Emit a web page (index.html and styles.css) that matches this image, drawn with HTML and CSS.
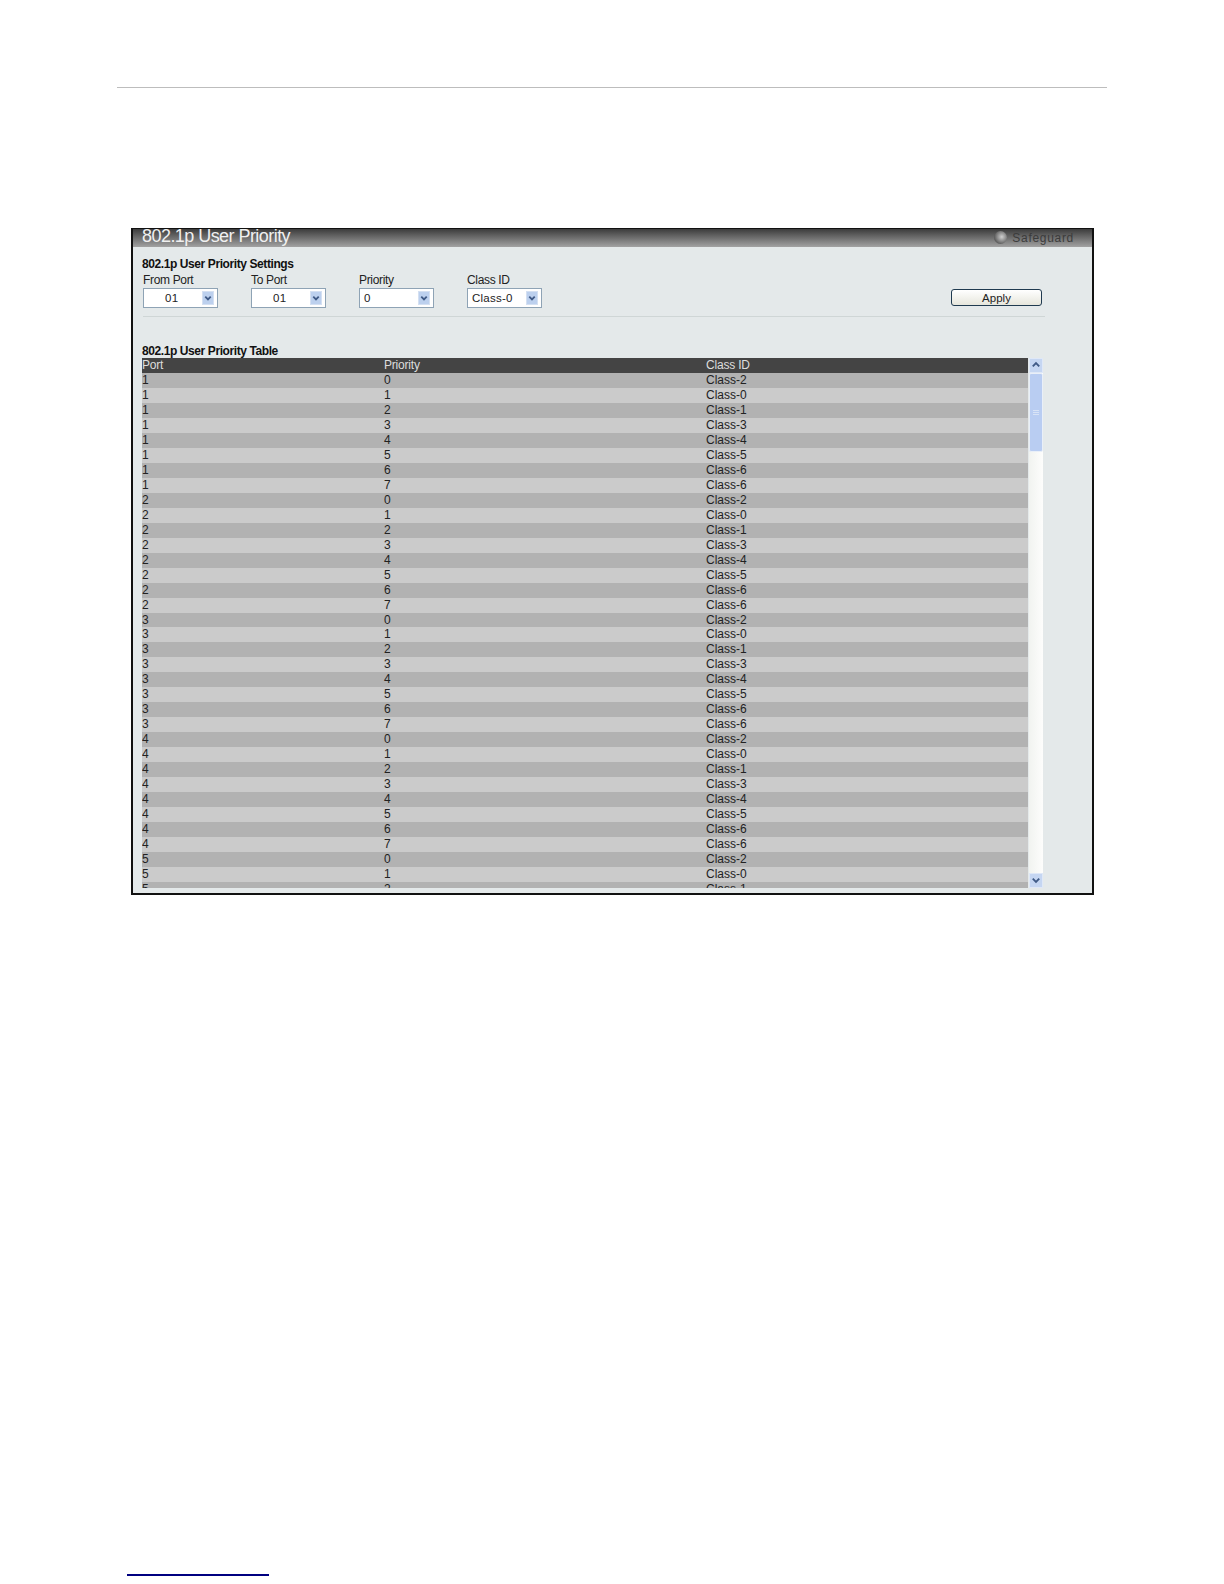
FILE: index.html
```html
<!DOCTYPE html>
<html lang="en">
<head>
<meta charset="utf-8">
<title>802.1p User Priority</title>
<link rel="stylesheet" href="styles.css">
</head>
<body>
<div class="page">
  <hr class="top-rule">
  <section class="panel">
    <header class="panel-head">
      <h1>802.1p User Priority</h1>
      <div class="safeguard"><span class="led"></span><span class="safe-text">Safeguard</span></div>
    </header>
    <div class="panel-body">
      <h2>802.1p User Priority Settings</h2>
      <form class="settings">
        <div class="field"><span class="label">From Port</span><div class="select center"><span class="value">01</span><span class="drop"><svg viewBox="0 0 11 11"><path d="M2.5 4 5.5 7 8.500 4" /></svg></span></div></div>
        <div class="field"><span class="label">To Port</span><div class="select center"><span class="value">01</span><span class="drop"><svg viewBox="0 0 11 11"><path d="M2.5 4 5.5 7 8.500 4" /></svg></span></div></div>
        <div class="field"><span class="label">Priority</span><div class="select"><span class="value">0</span><span class="drop"><svg viewBox="0 0 11 11"><path d="M2.5 4 5.5 7 8.500 4" /></svg></span></div></div>
        <div class="field"><span class="label">Class ID</span><div class="select"><span class="value">Class-0</span><span class="drop"><svg viewBox="0 0 11 11"><path d="M2.5 4 5.5 7 8.500 4" /></svg></span></div></div>
        <button type="button" class="apply">Apply</button>
      </form>
      <hr class="divider">
      <h2 class="table-title">802.1p User Priority Table</h2>
      <div class="table-wrap">
        <div class="table">
          <div class="row head"><span>Port</span><span>Priority</span><span>Class ID</span></div>
          <div class="rows">
            <div class="row"><span>1</span><span>0</span><span>Class-2</span></div>
            <div class="row"><span>1</span><span>1</span><span>Class-0</span></div>
            <div class="row"><span>1</span><span>2</span><span>Class-1</span></div>
            <div class="row"><span>1</span><span>3</span><span>Class-3</span></div>
            <div class="row"><span>1</span><span>4</span><span>Class-4</span></div>
            <div class="row"><span>1</span><span>5</span><span>Class-5</span></div>
            <div class="row"><span>1</span><span>6</span><span>Class-6</span></div>
            <div class="row"><span>1</span><span>7</span><span>Class-6</span></div>
            <div class="row"><span>2</span><span>0</span><span>Class-2</span></div>
            <div class="row"><span>2</span><span>1</span><span>Class-0</span></div>
            <div class="row"><span>2</span><span>2</span><span>Class-1</span></div>
            <div class="row"><span>2</span><span>3</span><span>Class-3</span></div>
            <div class="row"><span>2</span><span>4</span><span>Class-4</span></div>
            <div class="row"><span>2</span><span>5</span><span>Class-5</span></div>
            <div class="row"><span>2</span><span>6</span><span>Class-6</span></div>
            <div class="row"><span>2</span><span>7</span><span>Class-6</span></div>
            <div class="row"><span>3</span><span>0</span><span>Class-2</span></div>
            <div class="row"><span>3</span><span>1</span><span>Class-0</span></div>
            <div class="row"><span>3</span><span>2</span><span>Class-1</span></div>
            <div class="row"><span>3</span><span>3</span><span>Class-3</span></div>
            <div class="row"><span>3</span><span>4</span><span>Class-4</span></div>
            <div class="row"><span>3</span><span>5</span><span>Class-5</span></div>
            <div class="row"><span>3</span><span>6</span><span>Class-6</span></div>
            <div class="row"><span>3</span><span>7</span><span>Class-6</span></div>
            <div class="row"><span>4</span><span>0</span><span>Class-2</span></div>
            <div class="row"><span>4</span><span>1</span><span>Class-0</span></div>
            <div class="row"><span>4</span><span>2</span><span>Class-1</span></div>
            <div class="row"><span>4</span><span>3</span><span>Class-3</span></div>
            <div class="row"><span>4</span><span>4</span><span>Class-4</span></div>
            <div class="row"><span>4</span><span>5</span><span>Class-5</span></div>
            <div class="row"><span>4</span><span>6</span><span>Class-6</span></div>
            <div class="row"><span>4</span><span>7</span><span>Class-6</span></div>
            <div class="row"><span>5</span><span>0</span><span>Class-2</span></div>
            <div class="row"><span>5</span><span>1</span><span>Class-0</span></div>
            <div class="row"><span>5</span><span>2</span><span>Class-1</span></div>
          </div>
        </div>
        <div class="scrollbar">
          <span class="sb-btn"><svg viewBox="0 0 13 13"><path d="M3 8 6.500 4.500 10 8" /></svg></span>
          <span class="sb-thumb"><i></i><i></i><i></i></span>
          <span class="sb-track"></span>
          <span class="sb-btn"><svg viewBox="0 0 13 13"><path d="M3 5 6.500 8.500 10 5" /></svg></span>
        </div>
      </div>
    </div>
  </section>
  <div class="foot-rule"></div>
</div>
</body>
</html>
```
FILE: styles.css
```css
* { box-sizing: border-box; }
html, body { margin: 0; padding: 0; background: #fff; }
body { font-family: "Liberation Sans", Arial, sans-serif; font-size: 12px; color: #222; }
.page { width: 1224px; height: 1584px; padding-top: 87px; display: flex; flex-direction: column; }
.top-rule { margin: 0 117px; height: 1px; border: 0; background: #bdbdbd; flex: none; }
.panel { margin: 140px 0 0 131px; width: 963px; height: 667px; border: 2px solid #111; border-top-width: 1px; background: #e4e9ea; display: flex; flex-direction: column; flex: none; }
.panel-head { height: 18px; flex: none; background: linear-gradient(#3c3c3c, #a2a2a2); display: flex; align-items: center; justify-content: space-between; padding: 0 18px 0 9px; }
h1 { margin: 0 0 3px; font-size: 18px; letter-spacing: -.55px; font-weight: 400; color: #f0f0f0; line-height: 19px; white-space: nowrap; }
.safeguard { display: flex; align-items: center; gap: 5px; margin-bottom: 1px; }
.led { width: 13px; height: 13px; border-radius: 50%; background: radial-gradient(circle at 60% 45%, #d0d0d0, #4c4c4c 80%); }
.safe-text { font-size: 12px; color: #3c3c3c; letter-spacing: .7px; }
.panel-body { padding: 10px 0 0 9px; flex: 1; min-height: 0; display: flex; flex-direction: column; }
h2 { margin: 0; font-size: 12px; letter-spacing: -.41px; line-height: 14px; font-weight: 700; color: #111; }
.settings { display: flex; align-items: flex-end; margin: 0 0 0 1px; height: 37px; }
.field { width: 108px; display: flex; flex-direction: column; }
.label { font-size: 12px; letter-spacing: -.33px; line-height: 15px; color: #222; }
.select { width: 75px; height: 20px; background: #fff; border: 1px solid #8ea3b5; display: flex; align-items: center; padding: 0 3px 0 4px; }
.select .value { flex: 1; font-size: 11.500px; letter-spacing: .25px; color: #222; }
.select.center .value { padding-left: 17px; }
.drop { width: 12px; height: 14px; background: #bcd0ee; border: 1px solid #d4e0f2; display: flex; align-items: center; }
.drop svg, .sb-btn svg { display: block; width: 100%; }
.drop path { fill: none; stroke: #3f5a86; stroke-width: 2; }
.apply { width: 91px; height: 17px; margin: 0 0 2px 376px; padding: 0; border: 1px solid #1f3a50; border-radius: 3px; background: linear-gradient(#fff, #e6e6dc); font: 11.500px "Liberation Sans", Arial, sans-serif; color: #222; }
.divider { margin: 8px 47px 0 1px; height: 1px; border: 0; background: #cfd6d6; flex: none; }
.table-title { margin-top: 27px; }
.table-wrap { display: flex; flex: none; margin-right: 48px; }
.table { width: 886px; flex: none; overflow: hidden; }
.rows { height: 515px; overflow: hidden; }
.row { display: grid; grid-template-columns: 242px 322px 1fr; height: 14.970px; line-height: 15px; background: #cbcbcb; overflow: hidden; }
.rows .row:nth-child(odd) { background: #b2b2b2; }
.row.head { background: #444; color: #ddd; height: 15px; line-height: 14px; letter-spacing: -.2px; }
.scrollbar { width: 14px; margin-left: 1px; height: 530px; display: flex; flex-direction: column; background: linear-gradient(90deg, #f1f3f0, #fdfdfc); flex: none; }
.sb-btn { width: 14px; height: 15px; flex: none; background: #c5d6f2; border: 1px solid #dfe8f7; }
.sb-btn path { fill: none; stroke: #3f5a86; stroke-width: 2; }
.sb-thumb { height: 79px; flex: none; background: #b9cdf2; border: 1px solid #e9eff8; border-radius: 2px; display: flex; flex-direction: column; align-items: center; justify-content: center; gap: 1px; }
.sb-thumb i { display: block; width: 6px; height: 1px; background: #d8e3f6; }
.sb-track { flex: 1; }
.foot-rule { margin: 679px 0 0 127px; width: 142px; height: 2px; background: #000080; flex: none; }
```
